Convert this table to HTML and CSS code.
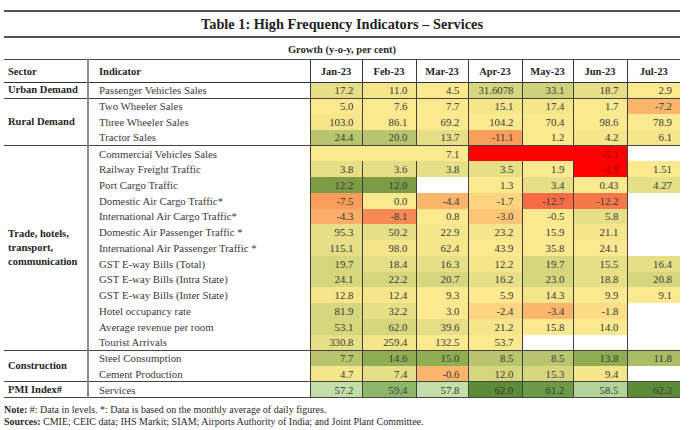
FILE: index.html
```html
<!DOCTYPE html>
<html>
<head>
<meta charset="utf-8">
<link rel="stylesheet" href="styles.css">
</head>
<body>
<div class="page">
  <div class="rule"></div>
  <h1 class="title">Table 1: High Frequency Indicators – Services</h1>
  <div class="rule"></div>
  <div class="unit">Growth (y-o-y, per cent)</div>
  <table class="grid">
    <colgroup>
      <col class="w-sector"><col class="w-ind">
      <col class="w-52"><col class="w-54"><col class="w-52"><col class="w-54"><col class="w-51"><col class="w-54"><col class="w-53">
    </colgroup>
    <thead>
      <tr>
        <th class="sector">Sector</th>
        <th class="ind">Indicator</th>
        <th>Jan-23</th><th>Feb-23</th><th>Mar-23</th><th>Apr-23</th><th>May-23</th><th>Jun-23</th><th>Jul-23</th>
      </tr>
    </thead>
    <tbody>
      <tr class="gs">
        <td class="sector" rowspan="1">Urban Demand</td>
        <td class="ind">Passenger Vehicles Sales</td>
        <td class="g1">17.2</td><td class="y1">11.0</td><td class="y0">4.5</td><td class="g2">31.6078</td><td class="g2b">33.1</td><td class="g1">18.7</td><td class="y0">2.9</td>
      </tr>
      <tr class="gs">
        <td class="sector" rowspan="3">Rural Demand</td>
        <td class="ind">Two Wheeler Sales</td>
        <td class="y0">5.0</td><td class="y0">7.6</td><td class="y0">7.7</td><td class="y1">15.1</td><td class="y1">17.4</td><td class="y0">1.7</td><td class="o1">-7.2</td>
      </tr>
      <tr>
        <td class="ind">Three Wheeler Sales</td>
        <td class="y1">103.0</td><td class="y0">86.1</td><td class="y0">69.2</td><td class="y0">104.2</td><td class="y0">70.4</td><td class="y0">98.6</td><td class="y0">78.9</td>
      </tr>
      <tr>
        <td class="ind">Tractor Sales</td>
        <td class="g3">24.4</td><td class="g3">20.0</td><td class="g1">13.7</td><td class="o2">-11.1</td><td class="y0">1.2</td><td class="y1">4.2</td><td class="y1">6.1</td>
      </tr>
      <tr class="gs">
        <td class="sector" rowspan="13">Trade, hotels,<br>transport,<br>communication</td>
        <td class="ind">Commercial Vehicles Sales</td>
        <td class="y0" colspan="3">7.1</td><td class="r" colspan="3">-5.1</td><td class="w"></td>
      </tr>
      <tr>
        <td class="ind">Railway Freight Traffic</td>
        <td class="g1">3.8</td><td class="g1">3.6</td><td class="g1">3.8</td><td class="g1">3.5</td><td class="y0">1.9</td><td class="r">-1.9</td><td class="y0">1.51</td>
      </tr>
      <tr>
        <td class="ind">Port Cargo Traffic</td>
        <td class="g5">12.2</td><td class="g5">12.0</td><td class="w"></td><td class="y0">1.3</td><td class="g1">3.4</td><td class="y0">0.43</td><td class="g1">4.27</td>
      </tr>
      <tr>
        <td class="ind">Domestic Air Cargo Traffic*</td>
        <td class="o2">-7.5</td><td class="y0">0.0</td><td class="o1">-4.4</td><td class="o0">-1.7</td><td class="o3">-12.7</td><td class="o3b">-12.2</td><td class="w"></td>
      </tr>
      <tr>
        <td class="ind">International Air Cargo Traffic*</td>
        <td class="o1b">-4.3</td><td class="o2b">-8.1</td><td class="y0">0.8</td><td class="o0b">-3.0</td><td class="y0">-0.5</td><td class="g1">5.8</td><td class="w"></td>
      </tr>
      <tr>
        <td class="ind">Domestic Air Passenger Traffic *</td>
        <td class="g1">95.3</td><td class="g1">50.2</td><td class="y1">22.9</td><td class="y1">23.2</td><td class="y0">15.9</td><td class="y1">21.1</td><td class="w"></td>
      </tr>
      <tr>
        <td class="ind">International Air Passenger Traffic *</td>
        <td class="g1">115.1</td><td class="y1">98.0</td><td class="y1">62.4</td><td class="y0">43.9</td><td class="y0">35.8</td><td class="y0">24.1</td><td class="w"></td>
      </tr>
      <tr>
        <td class="ind">GST E-way Bills (Total)</td>
        <td class="g2">19.7</td><td class="g1">18.4</td><td class="g1">16.3</td><td class="y1">12.2</td><td class="g2">19.7</td><td class="g1">15.5</td><td class="g1">16.4</td>
      </tr>
      <tr>
        <td class="ind">GST E-way Bills (Intra State)</td>
        <td class="g2">24.1</td><td class="g2">22.2</td><td class="g2">20.7</td><td class="g1">16.2</td><td class="g2">23.0</td><td class="g1">18.8</td><td class="g2">20.8</td>
      </tr>
      <tr>
        <td class="ind">GST E-way Bills (Inter State)</td>
        <td class="y1">12.8</td><td class="y1">12.4</td><td class="y0">9.3</td><td class="y0">5.9</td><td class="y1">14.3</td><td class="y0">9.9</td><td class="y0">9.1</td>
      </tr>
      <tr>
        <td class="ind">Hotel occupancy rate</td>
        <td class="g2">81.9</td><td class="g1">32.2</td><td class="y0">3.0</td><td class="o0">-2.4</td><td class="o1">-3.4</td><td class="o0c">-1.8</td><td class="w"></td>
      </tr>
      <tr>
        <td class="ind">Average revenue per room</td>
        <td class="g2">53.1</td><td class="g2">62.0</td><td class="g1">39.6</td><td class="y1">21.2</td><td class="y0">15.8</td><td class="y0">14.0</td><td class="w"></td>
      </tr>
      <tr>
        <td class="ind">Tourist Arrivals</td>
        <td class="g1">330.8</td><td class="y1">259.4</td><td class="y0">132.5</td><td class="y0">53.7</td><td class="w"></td><td class="w"></td><td class="w"></td>
      </tr>
      <tr class="gs">
        <td class="sector" rowspan="2">Construction</td>
        <td class="ind">Steel Consumption</td>
        <td class="g3">7.7</td><td class="g4">14.6</td><td class="g4">15.0</td><td class="g3">8.5</td><td class="g3">8.5</td><td class="g4">13.8</td><td class="g3b">11.8</td>
      </tr>
      <tr>
        <td class="ind">Cement Production</td>
        <td class="y1">4.7</td><td class="g1">7.4</td><td class="o1">-0.6</td><td class="g2">12.0</td><td class="g2">15.3</td><td class="y1">9.4</td><td class="w"></td>
      </tr>
      <tr class="gs last">
        <td class="sector">PMI Index#</td>
        <td class="ind">Services</td>
        <td class="p1">57.2</td><td class="p2">59.4</td><td class="p1">57.8</td><td class="p4">62.0</td><td class="p3">61.2</td><td class="p1b">58.5</td><td class="p4">62.3</td>
      </tr>
    </tbody>
  </table>
  <div class="notes">
    <p><b>Note:</b> #: Data in levels. *: Data is based on the monthly average of daily figures.</p>
    <p><b>Sources:</b> CMIE; CEIC data; IHS Markit; SIAM; Airports Authority of India; and Joint Plant Committee.</p>
  </div>
</div>
</body>
</html>
```

FILE: styles.css
```css
* { box-sizing: border-box; }
html, body { margin: 0; padding: 0; background: #ffffff; }
body {
  font-family: "Liberation Serif", "Times New Roman", serif;
  color: #2f2f2f;
}
.page {
  width: 690px;
  padding: 10px 10px 0 4px;
}
.rule {
  width: 676px;
  height: 2px;
  background: #555555;
}
.title {
  margin: 0;
  height: 24px;
  line-height: 25px;
  text-align: center;
  font-size: 14.3px;
  font-weight: bold;
  color: #222222;
}
.unit {
  height: 21px;
  line-height: 24px;
  text-align: center;
  font-size: 10.5px;
  font-weight: bold;
  color: #2a2a2a;
}
.grid {
  width: 676px;
  table-layout: fixed;
  border-collapse: collapse;
  font-size: 10.8px;
}
.w-sector { width: 84px; }
.w-ind { width: 222px; }
.w-52 { width: 52px; }
.w-54 { width: 54px; }
.w-51 { width: 51px; }
.w-53 { width: 53px; }

.grid th {
  height: 23px;
  padding: 0;
  font-weight: bold;
  font-size: 10.5px;
  text-align: center;
  border-top: 1px solid #4a4a4a;
  border-bottom: 1px solid #333333;
  border-left: 1px solid #3a3a3a;
  color: #262626;
}
.grid th.sector { text-align: left; padding-left: 4px; border-left: none; }
.grid th.ind { text-align: left; padding-left: 10px; border-left: 2px solid #8c8c8c; }

.grid td {
  height: 15.75px;
  padding: 0 8px 0 0;
  line-height: 14px;
  text-align: right;
  white-space: nowrap;
  border-left: 1px solid #3f3f3f;
  color: #383838;
}
.grid td.sector {
  text-align: left;
  padding: 0 0 0 4px;
  font-weight: bold;
  font-size: 10.5px;
  border-left: none;
  color: #262626;
}
.grid td.ind {
  text-align: left;
  padding: 0 0 0 10px;
  border-left: 2px solid #8c8c8c;
  color: #3a3a3a;
}
.grid tr.gs td { border-top: 1px solid #444444; }
.grid tr.last td { border-bottom: 1px solid #444444; }

/* heat-map colours */
.y0 { background: #fbe98f; }
.y1 { background: #f5e68c; }
.g1 { background: #e6df88; }
.g2 { background: #d6d67f; }
.g2b { background: #cfd27c; }
.g3 { background: #b8c56e; }
.g3b { background: #a9bd64; }
.g4 { background: #8fad53; }
.g5 { background: #7c9b44; }
.o0 { background: #fdd582; }
.o0b { background: #fcc476; }
.o0c { background: #fddc86; }
.o1 { background: #fbb56c; }
.o1b { background: #fbae69; }
.o2 { background: #f99d5d; }
.o2b { background: #f68a55; }
.o3 { background: #f46b45; }
.o3b { background: #f47848; }
.r { background: #ff0000; color: #8a1010 !important; }
.w { background: #ffffff; }
.p1 { background: #c4dea9; }
.p1b { background: #b3d39b; }
.p2 { background: #8eb66b; }
.p3 { background: #6c9b47; }
.p4 { background: #5c8c37; }

.notes {
  margin-top: 6px;
  font-size: 10px;
  line-height: 12px;
  color: #2a2a2a;
}
.notes p { margin: 0; }
.notes b { font-weight: bold; }
```
